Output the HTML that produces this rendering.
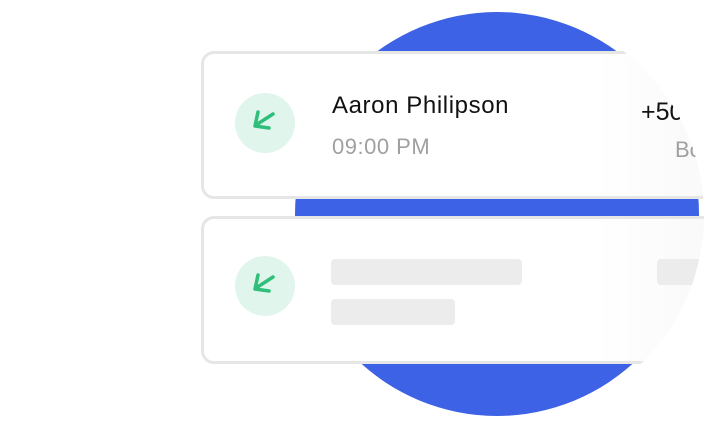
<!DOCTYPE html>
<html><head><style>
html,body{margin:0;padding:0;background:#fff;width:705px;height:421px;overflow:hidden;font-family:"Liberation Sans",sans-serif}
.blue{position:absolute;left:295px;top:12px;width:404px;height:404px;border-radius:50%;background:#3e62e5}
.clip{position:absolute;left:0;top:0;width:705px;height:421px;clip-path:path("M0 -10 H497 V8 A207 207 0 0 1 497 422 H0 Z")}
.card{position:absolute;left:201px;width:560px;height:142px;border:3px solid #e6e6e6;border-radius:13px;background:linear-gradient(90deg,#fff 70%,#f6f6f6)}
.ic{position:absolute;left:31px;width:60px;height:60px;border-radius:50%;background:#e0f5ec}
.ic svg{position:absolute;left:0;top:0}
.t{position:absolute;white-space:nowrap}
.bar{position:absolute;background:#ececec;border-radius:4px;height:26px}
</style></head><body>
<div class="blue"></div>
<div class="clip">
<div class="card" style="top:51px">
  <div class="ic" style="top:39px"><svg width="60" height="60"><path d="M38 21 L21 32 M23 19 L20 33 L34 35" stroke="#2fbf7a" stroke-width="3.5" fill="none" stroke-linecap="round" stroke-linejoin="round"/></svg></div>
  <div class="t" style="left:128px;top:38px;font-size:24px;letter-spacing:0.6px;color:#111">Aaron Philipson</div>
  <div class="t" style="left:128px;top:80px;font-size:22px;letter-spacing:0.5px;color:#a0a0a0">09:00 PM</div>
  <div class="t" style="left:437px;top:44px;font-size:25px;color:#111">+50</div>
  <div class="t" style="left:471px;top:83px;font-size:22px;color:#a0a0a0">Bo</div>
</div>
<div class="card" style="top:216px">
  <div class="ic" style="top:37px"><svg width="60" height="60"><path d="M38 21 L21 32 M23 19 L20 33 L34 35" stroke="#2fbf7a" stroke-width="3.5" fill="none" stroke-linecap="round" stroke-linejoin="round"/></svg></div>
  <div class="bar" style="left:127px;top:40px;width:191px"></div>
  <div class="bar" style="left:127px;top:80px;width:124px"></div>
  <div class="bar" style="left:453px;top:40px;width:100px"></div>
</div>
</div>
</body></html>
